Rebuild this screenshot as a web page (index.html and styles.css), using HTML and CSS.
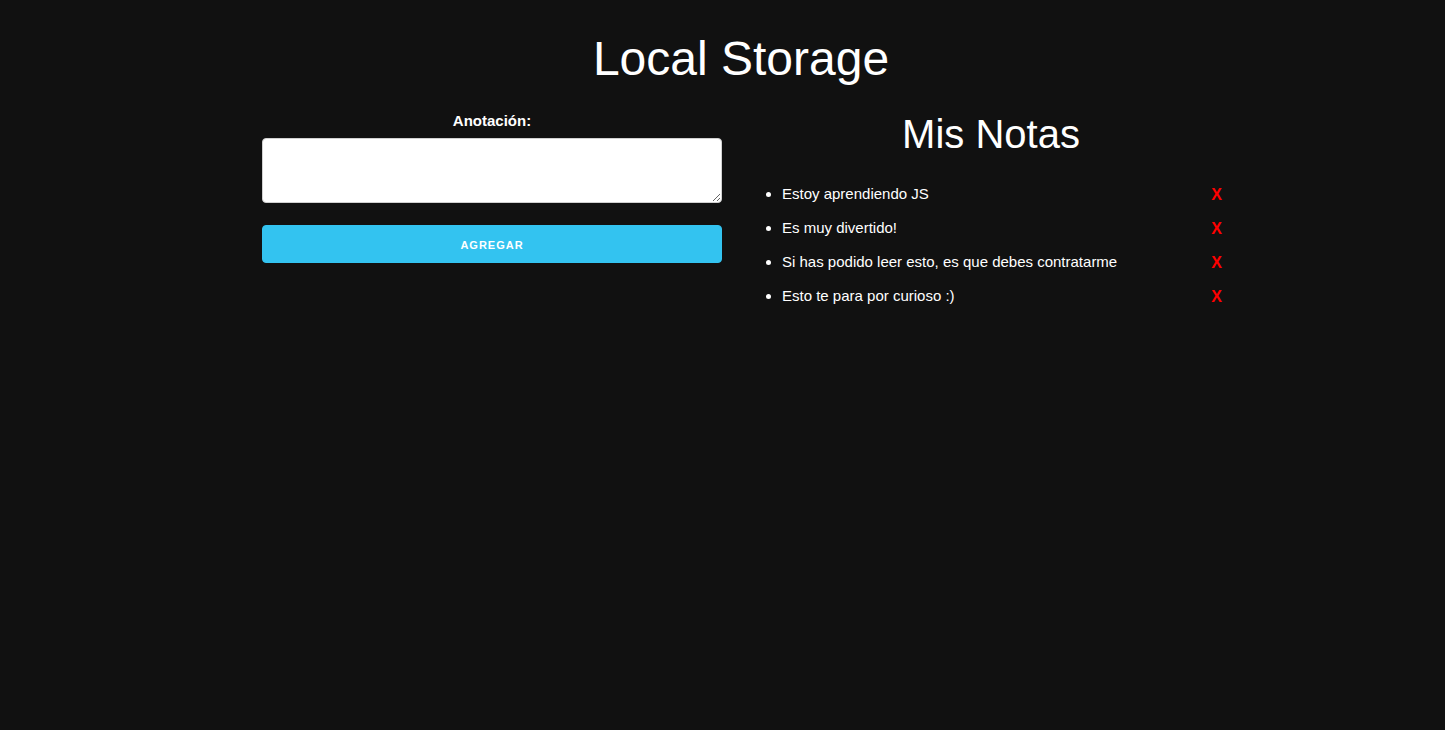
FILE: index.html
```html
<!DOCTYPE html>
<html lang="es">
<head>
<meta charset="utf-8">
<title>Local Storage</title>
<link rel="stylesheet" href="styles.css">
</head>
<body>
<div class="container">
  <h1 class="title">Local Storage</h1>
  <div class="row">
    <div class="column form-col">
      <form class="note-form">
        <label class="label" for="nota">Anotación:</label>
        <textarea id="nota" class="textarea"></textarea>
        <button type="button" class="button-primary">Agregar</button>
      </form>
    </div>
    <div class="column list-col">
      <h2 class="subtitle">Mis Notas</h2>
      <ul class="notes">
        <li class="note"><span>Estoy aprendiendo JS</span><a class="delete">X</a></li>
        <li class="note"><span>Es muy divertido!</span><a class="delete">X</a></li>
        <li class="note"><span>Si has podido leer esto, es que debes contratarme</span><a class="delete">X</a></li>
        <li class="note"><span>Esto te para por curioso :)</span><a class="delete">X</a></li>
      </ul>
    </div>
  </div>
</div>
</body>
</html>
```

FILE: styles.css
```css
html, body {
  margin: 0;
  padding: 0;
}
body {
  background: #111111;
  color: #ffffff;
  font-family: "Liberation Sans", Arial, sans-serif;
  font-size: 15px;
  line-height: 1.6;
}
.container {
  width: 958px;
  margin: 0 auto;
  padding-left: 37px;
}
.title {
  font-size: 48px;
  font-weight: 400;
  line-height: 1.2;
  text-align: center;
  margin: 30px 0 21px;
}
.row {
  display: flex;
  gap: 39px;
}
.column {
  width: 460px;
  flex: none;
}
.note-form {
  display: flex;
  flex-direction: column;
}
.label {
  display: block;
  text-align: center;
  font-weight: 700;
  margin-bottom: 5px;
}
.textarea {
  display: block;
  box-sizing: border-box;
  width: 100%;
  height: 65px;
  padding: 6px 10px;
  border: 1px solid #d1d1d1;
  border-radius: 4px;
  background: #ffffff;
  margin: 0 0 22px;
  font-family: inherit;
}
.button-primary {
  display: block;
  width: 100%;
  height: 38px;
  padding: 0 30px;
  border: 1px solid #33c3f0;
  border-radius: 4px;
  background: #33c3f0;
  color: #ffffff;
  font-family: "Liberation Sans", Arial, sans-serif;
  font-size: 11px;
  font-weight: 700;
  letter-spacing: 1px;
  text-transform: uppercase;
  line-height: 38px;
}
.subtitle {
  font-size: 40px;
  font-weight: 400;
  line-height: 1.25;
  text-align: center;
  margin: 0 0 23px;
}
.notes {
  margin: 0;
  padding-left: 21px;
  list-style: disc outside;
}
.note {
  margin-bottom: 10px;
}
.note span {
  display: inline-block;
}
.delete {
  float: right;
  color: #ff0000;
  font-size: 16px;
  font-weight: 700;
  margin-right: -1px;
  cursor: pointer;
}
```
